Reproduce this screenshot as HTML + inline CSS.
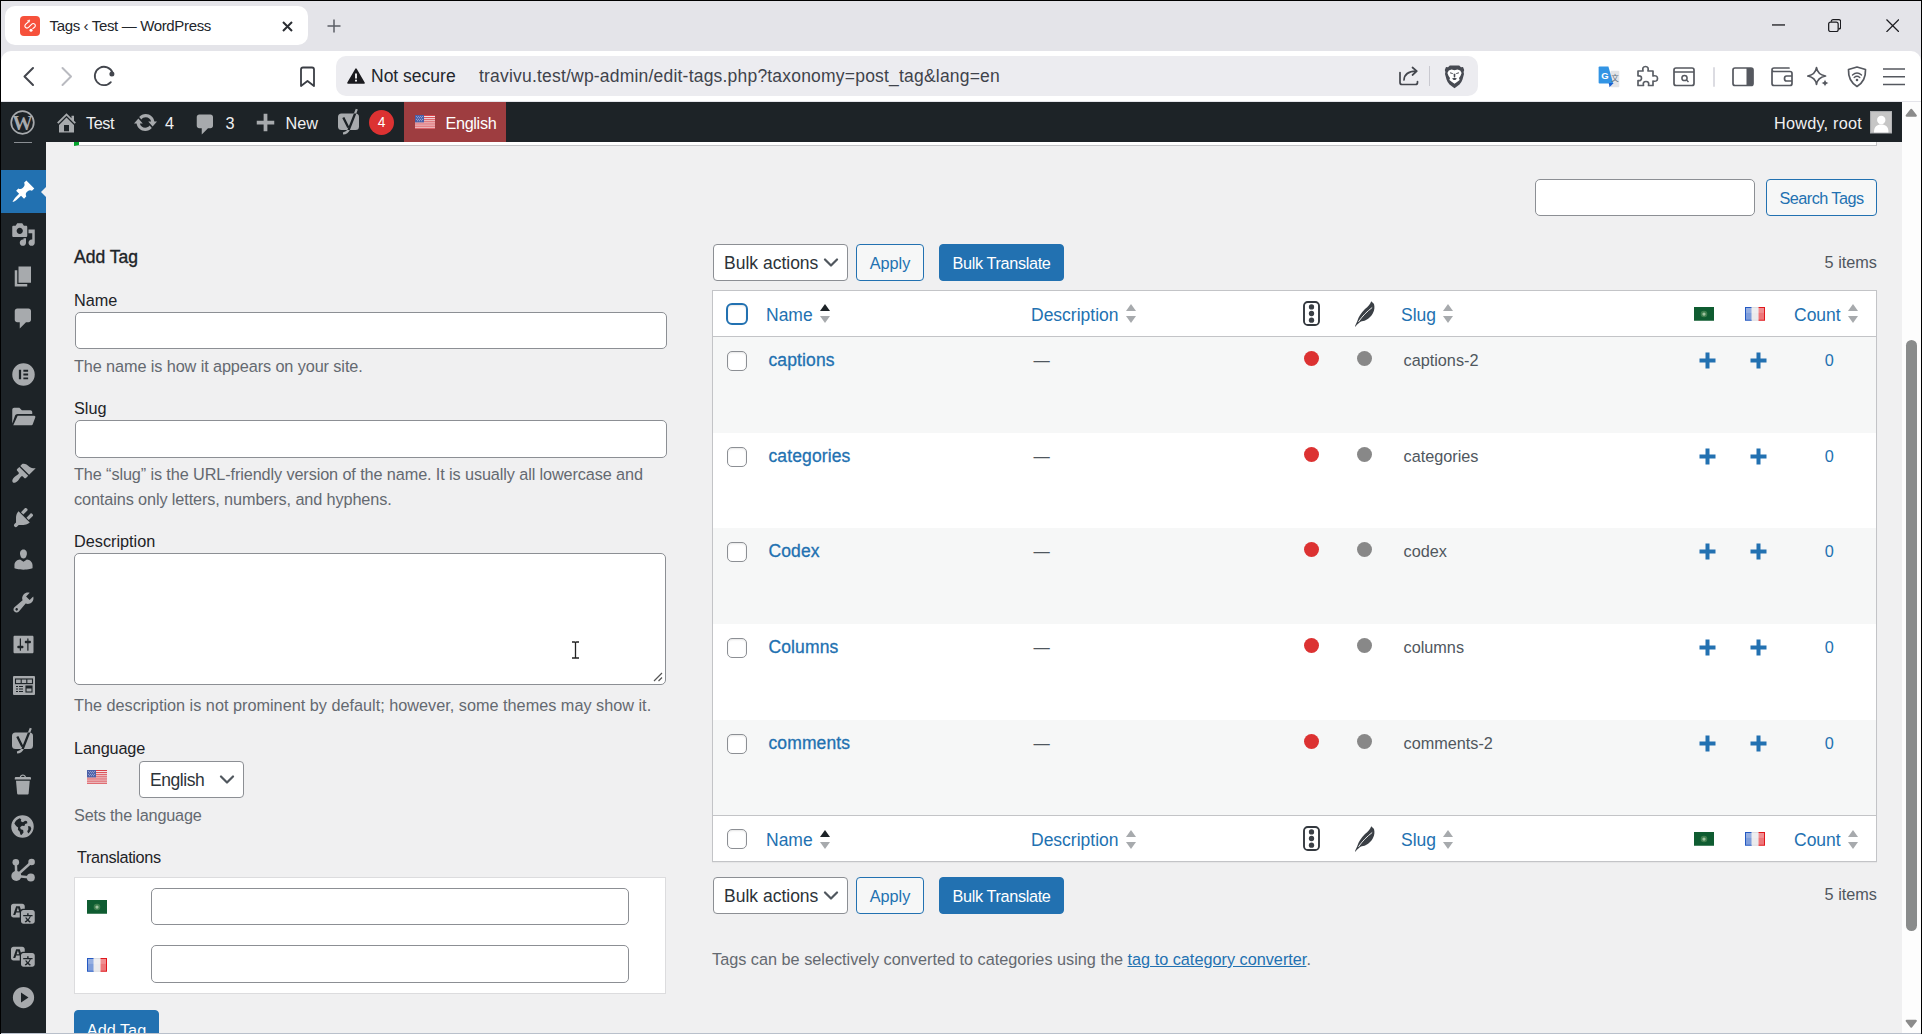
<!DOCTYPE html>
<html lang="en">
<head>
<meta charset="utf-8">
<title>Tags ‹ Test — WordPress</title>
<style>
*{box-sizing:border-box}
html,body{margin:0;padding:0}
body{width:1922px;height:1034px;overflow:hidden;background:#000;position:relative;font-family:"Liberation Sans",sans-serif;font-size:16.25px;color:#3c434a;line-height:1.4}
.abs{position:absolute}
svg{display:block}
#win{position:absolute;left:1px;top:1px;width:1920px;height:1033px;overflow:hidden;background:#e4e4e9}
#bottomline{position:absolute;left:0;top:1032px;width:1920px;height:1px;background:#b9c0cb;z-index:50}
/* ---------- browser chrome ---------- */
#tab{position:absolute;left:4px;top:5px;width:303px;height:39px;background:#fff;border-radius:10px}
#tab .fav{position:absolute;left:15px;top:10px;width:20px;height:20px;border-radius:4px;background:#f6513b}
#tab .ttl{position:absolute;left:44.5px;top:10px;font-size:15px;line-height:20px;color:#22262c;white-space:nowrap;letter-spacing:-.35px}
#toolbar{position:absolute;left:0;top:50px;width:1920px;height:51px;background:#fff;border-radius:10px 10px 0 0;border-bottom:1px solid #e4e4ea}
#tbin{position:absolute;left:0;top:-1px;width:1920px;height:52px}
#urlbar{position:absolute;left:335px;top:6px;width:1142px;height:40px;border-radius:10px;background:#ececf0}
#urlbar .ns{position:absolute;left:35px;top:9px;font-size:17.5px;line-height:22px;color:#22262c;white-space:nowrap}
#urlbar .url{position:absolute;left:143px;top:9px;font-size:17.5px;line-height:22px;color:#3f434b;white-space:nowrap;letter-spacing:.2px}
/* ---------- page ---------- */
#page{position:absolute;left:0;top:101px;width:1901px;height:931px;overflow:hidden;background:#f0f0f1}
#sb{position:absolute;left:1901px;top:101px;width:19px;height:931px;background:#fdfdfd}
#sb .thumb{position:absolute;left:4px;top:238px;width:11px;height:591px;border-radius:5.5px;background:#8a8c8c}
#adminbar{position:absolute;left:0;top:0;width:1901px;height:40px;background:#1d2327;color:#f0f0f1;z-index:10}
#adminbar .t{position:absolute;top:0;line-height:43px;font-size:16.25px;white-space:nowrap;color:#f0f0f1}
#menu{position:absolute;left:0;top:40px;width:45px;height:900px;background:#1d2327}
#menu .cur{position:absolute;left:0;top:28px;width:45px;height:43px;background:#2271b1}
#menu .cur:after{content:"";position:absolute;right:0;top:17px;border:5px solid transparent;border-right-color:#f0f0f1;border-left:0;height:0;width:0}
.mi{position:absolute;left:10px;width:25px;height:25px;fill:#a7aaad}

/* ---------- content ---------- */
#content{position:absolute;left:0;top:0;width:1901px;height:931px}
.tx{position:absolute;white-space:nowrap;line-height:24px;font-size:16.25px}
.lbl{color:#1d2327}
.help{color:#646970}
.inp{position:absolute;background:#fff;border:1px solid #8c8f94;border-radius:5px}
.btn{position:absolute;border:1px solid #2271b1;border-radius:4px;background:#f6f7f7;color:#2271b1;font-size:16.25px;text-align:center;line-height:37px;white-space:nowrap}
.btn.pri{background:#2271b1;color:#fff}
.sel{position:absolute;background:#fff;border:1px solid #8c8f94;border-radius:4px;color:#2c3338;font-size:17.5px;line-height:37px;padding-left:10px;white-space:nowrap}
.sel svg{position:absolute;right:8px;top:13px}
.flag{position:absolute;width:20px;height:13.75px}
#notice{position:absolute;left:73px;top:40px;width:1803px;height:4px;background:#fff;border-left:5px solid #00a32a;border-bottom:1px solid #c3c4c7;border-right:1px solid #c3c4c7}
#trbox{position:absolute;left:73px;top:775px;width:592px;height:117px;background:#fff;border:1px solid #dcdcde}
/* table */
#tbl{position:absolute;left:711px;top:188px;width:1165px;border:1px solid #c3c4c7;border-spacing:0;border-collapse:separate;table-layout:fixed;background:#fff;box-shadow:0 1px 1px rgba(0,0,0,.04)}
#tbl th,#tbl td{padding:0;margin:0;text-align:left;vertical-align:top;position:relative;font-weight:400;overflow:visible}
#tbl thead th{height:45px;border-bottom:1px solid #c3c4c7;font-size:17.5px;color:#2271b1;line-height:42px;padding:3px 0 0 10px;white-space:nowrap}
#tbl tfoot th{height:45px;border-top:1px solid #c3c4c7;font-size:17.5px;color:#2271b1;line-height:42px;padding:3px 0 0 10px;white-space:nowrap}
#tbl tbody td{height:95.7px;font-size:16.25px;color:#50575e;line-height:24px;padding:11px 0 0 12.5px;white-space:nowrap}
#tbl tbody tr:nth-child(odd) td{background:#f6f7f7}
#tbl .rt{font-size:17.5px;font-weight:400;color:#2271b1;letter-spacing:.12px;-webkit-text-stroke:.3px #2271b1}
.cb{position:absolute;left:14px;top:14px;width:20px;height:20px;border:1px solid #8c8f94;border-radius:5px;background:#fff;box-shadow:inset 0 1px 2px rgba(0,0,0,.1)}
.cb.foc{left:13px;top:12px;width:22px;height:22px;border:2px solid #2271b1;border-radius:6px}
.sort{display:inline-block;vertical-align:middle;margin-left:7px;margin-top:-4px;position:relative;top:-.7px}
.dot{position:absolute;left:10px;top:14px;width:15px;height:15px;border-radius:50%}
.dot.r{background:#dc3232;left:11px}.dot.g{background:#888;left:12px}
.plus{position:absolute;left:14.5px;top:15px}
.cnt{display:block;text-align:center;color:#2271b1;padding-right:14px}
</style>
</head>
<body>
<div id="win">
<div id="bottomline"></div>
<!-- TABSTRIP -->
<div id="tab"><div class="fav"><svg width="20" height="20" viewBox="0 0 20 20"><path d="M7.500 4.800 L9.700 3.900 L9.200 6.200 Z" fill="#fff" stroke="#fff" stroke-width=".6" stroke-linejoin="round"/><path d="M8.200 6 L5.800 8.200 Q4 10 5.600 11.500 Q7.200 12.800 8.800 11.200 L11.500 8.300 Q13.200 6.700 14.700 8.200 Q16.200 9.800 14.200 11.500 L12.800 12.700" stroke="#fff" stroke-width="1.100" fill="none" stroke-linecap="round"/><circle cx="11" cy="14.300" r="1.500" fill="#fff"/></svg></div><div class="ttl">Tags ‹ Test — WordPress</div></div>
<svg class="abs" style="left:280.5px;top:19.5px" width="11" height="11" viewBox="0 0 11 11"><path d="M1 1 L10 10 M10 1 L1 10" stroke="#2a2d33" stroke-width="2" fill="none"/></svg><svg class="abs" style="left:325.5px;top:18px" width="14" height="14" viewBox="0 0 14 14"><path d="M7 0.500 V13.500 M0.500 7 H13.500" stroke="#5b5e66" stroke-width="1.500" fill="none"/></svg><svg class="abs" style="left:1771px;top:22.600px" width="13" height="2" viewBox="0 0 13 2"><rect width="13" height="1.300" y="0.300" fill="#1b1b1f"/></svg><svg class="abs" style="left:1826.5px;top:17.5px" width="13.300" height="13.300" viewBox="0 0 14 14"><rect x="0.700" y="3.200" width="10" height="10" rx="2" fill="none" stroke="#1b1b1f" stroke-width="1.300"/><path d="M3.500 3 V2.700 Q3.500 0.700 5.500 0.700 H11.300 Q13.300 0.700 13.300 2.700 V8.500 Q13.300 10.500 11.300 10.500 H11" fill="none" stroke="#1b1b1f" stroke-width="1.300"/></svg><svg class="abs" style="left:1884.5px;top:17.800px" width="13.400" height="13.400" viewBox="0 0 14 14"><path d="M0.500 0.500 L13.500 13.500 M13.500 0.500 L0.500 13.500" stroke="#1b1b1f" stroke-width="1.300" fill="none"/></svg>
<!-- TOOLBAR -->
<div id="toolbar"><div id="tbin">
  <div id="urlbar"><div class="ns">Not secure</div><div class="url">travivu.test/wp-admin/edit-tags.php?taxonomy=post_tag&amp;lang=en</div></div>
<svg class="abs" style="left:21.5px;top:16px" width="13" height="21" viewBox="0 0 13 21"><path d="M10 2 L1.500 10.500 L10 19" stroke="#43464d" stroke-width="2" fill="none" stroke-linecap="round" stroke-linejoin="round"/></svg><svg class="abs" style="left:59px;top:16px" width="13" height="21" viewBox="0 0 13 21"><path d="M2.500 2 L11 10.500 L2.500 19" stroke="#b9bac0" stroke-width="2" fill="none" stroke-linecap="round" stroke-linejoin="round"/></svg><svg class="abs" style="left:91px;top:13.5px" width="24" height="24" viewBox="0 0 24 24"><path d="M20.650 8.850 A9.200 9.200 0 1 0 18.840 18.160" stroke="#43464d" stroke-width="1.800" fill="none" stroke-linecap="round"/><circle cx="19.900" cy="9.900" r="2.500" fill="#43464d"/></svg><svg class="abs" style="left:298px;top:15.5px" width="17" height="22" viewBox="0 0 17 22"><path d="M2 3.500 Q2 1.500 4 1.500 H13 Q15 1.500 15 3.500 V20 L8.500 15 L2 20 Z" stroke="#3a3d44" stroke-width="1.800" fill="none" stroke-linejoin="round"/></svg><svg class="abs" style="left:346px;top:18px" width="18" height="16" viewBox="0 0 18 16"><path d="M9 1.200 L17 15 H1 Z" fill="#1b1b1f" stroke="#1b1b1f" stroke-width="1.600" stroke-linejoin="round"/><rect x="8.100" y="5.500" width="1.800" height="5" fill="#fff"/><rect x="8.100" y="11.700" width="1.800" height="1.800" fill="#fff"/></svg><svg class="abs" style="left:1397px;top:16px" width="21" height="20" viewBox="0 0 21 20"><path d="M2 6.500 V16.500 Q2 18.500 4 18.500 H17.500 Q19.500 18.500 19.500 16.500 V15.500" stroke="#43464d" stroke-width="1.700" fill="none" stroke-linecap="round"/><path d="M6 14 Q6.500 5.500 18 5.200 M14.500 1.500 L18.800 5.200 L14.500 9" stroke="#43464d" stroke-width="1.700" fill="none" stroke-linecap="round" stroke-linejoin="round"/></svg><svg class="abs" style="left:1427.8px;top:16px" width="1" height="20" viewBox="0 0 1 20"><rect width="1" height="20" fill="#c9c9d0"/></svg><svg class="abs" style="left:1442.500px;top:14.500px" width="21" height="24" viewBox="0 0 21 24"><path d="M5.800 0.500 H15.200 L17 2.200 L19 2 L20.200 4.900 L19.600 7 L20 9 L18.500 14.500 Q17.500 17.500 15.500 19.500 L10.500 23.300 L5.500 19.500 Q3.500 17.500 2.500 14.500 L1 9 L1.400 7 L0.800 4.900 L2 2 L4 2.200 Z" fill="#474a52"/><path d="M10.500 5.200 L13.500 4.600 L16.200 5.600 L17.600 8 L16.400 11 L15 13 L15.600 15 L13 17 L10.500 18.800 L8 17 L5.400 15 L6 13 L4.600 11 L3.400 8 L4.800 5.600 L7.500 4.600 Z" fill="#fff"/><path d="M6.200 7.200 L9 8.200 L8.600 9 L6 8.200 Z M14.800 7.200 L12 8.200 L12.400 9 L15 8.200 Z M9.600 8.800 H11.400 L11.200 12.300 H9.800 Z M8 13.600 L10.500 12.800 L13 13.600 L11.300 15 H9.700 Z" fill="#474a52"/></svg><svg class="abs" style="left:1596.500px;top:15.500px" width="22" height="22" viewBox="0 0 22 22"><rect x="12.500" y="4.800" width="8.800" height="16.500" rx="1" fill="#e3e4e7"/><path d="M1.600 0.400 H10.400 L15.200 17.500 H1.600 Q0.600 17.500 0.600 16.500 V1.400 Q0.600 0.400 1.600 0.400 Z" fill="#3294e4"/><path d="M10.800 17 H15.600 L11.500 21.200 Z" fill="#1b5fd0"/><text x="3.300" y="12.600" font-family="Liberation Sans,sans-serif" font-size="9.500" font-weight="700" fill="#fff">G</text><text x="13.300" y="15.300" font-family="Noto Sans CJK SC,Liberation Sans,sans-serif" font-size="7.500" fill="#5f6e80">文</text></svg><svg class="abs" style="left:1634.5px;top:15px" width="24" height="22" viewBox="0 0 24 22"><path d="M2 6 H7 Q6 1.500 9.500 1.500 Q13 1.500 12 6 H17 V11 Q21.500 10 21.500 13.500 Q21.500 17 17 16 V20.500 H12.500 Q13.500 16.500 10 16.500 Q6.500 16.500 7.500 20.500 H2 V15.500 Q5.500 16 5.500 13.200 Q5.500 10.500 2 11 Z" stroke="#5a5e65" stroke-width="1.700" fill="none" stroke-linejoin="round"/></svg><svg class="abs" style="left:1671.5px;top:17px" width="22" height="19.5" viewBox="0 0 22 19.5"><rect x="1" y="1" width="20" height="17.500" rx="2" stroke="#55585f" stroke-width="1.700" fill="none"/><path d="M1 5 H21" stroke="#55585f" stroke-width="1.500"/><circle cx="11.500" cy="11" r="2.600" stroke="#55585f" stroke-width="1.500" fill="none"/><path d="M13.500 13 L15.500 15" stroke="#55585f" stroke-width="1.500"/></svg><svg class="abs" style="left:1711.5px;top:16.5px" width="2" height="20" viewBox="0 0 2 20"><rect width="2" height="20" rx="1" fill="#dcdce2"/></svg><svg class="abs" style="left:1731px;top:17px" width="22" height="19.5" viewBox="0 0 22 19.5"><rect x="1" y="1" width="20" height="17.500" rx="2" stroke="#55585f" stroke-width="1.700" fill="none"/><path d="M14.500 1 H19 Q21 1 21 3 V16.500 Q21 18.500 19 18.500 H14.500 Z" fill="#55585f"/></svg><svg class="abs" style="left:1769.5px;top:17px" width="22" height="19.5" viewBox="0 0 22 19.5"><path d="M1 4 V16.500 Q1 18.500 3 18.500 H19 Q21 18.500 21 16.500 V6.500 Q21 4.500 19 4.500 H3 Q1 4.500 1 3 Q1 1 3 1 H18" stroke="#55585f" stroke-width="1.700" fill="none" stroke-linecap="round"/><path d="M21 9 H15.500 Q13.500 9 13.500 11.500 Q13.500 14 15.500 14 H21" stroke="#55585f" stroke-width="1.700" fill="none"/></svg><svg class="abs" style="left:1806px;top:15.5px" width="23" height="22" viewBox="0 0 23 22"><path d="M9.500 1.500 Q10.500 8.500 18.500 10 Q10.500 11.500 9.500 18.500 Q8.500 11.500 0.800 10 Q8.500 8.500 9.500 1.500 Z" stroke="#55585f" stroke-width="1.700" fill="none" stroke-linejoin="round"/><path d="M18 13.500 Q18.500 16.500 21.500 17 Q18.500 17.500 18 20.500 Q17.500 17.500 14.500 17 Q17.500 16.500 18 13.500 Z" fill="#55585f"/></svg><svg class="abs" style="left:1845.5px;top:15.5px" width="20" height="22" viewBox="0 0 20 22"><path d="M10 1 L18.500 3.500 Q19 15 10 20.500 Q1 15 1.500 3.500 Z" stroke="#55585f" stroke-width="1.700" fill="none" stroke-linejoin="round"/><path d="M5.500 9 Q10 5 14.500 9 M7.200 11.500 Q10 9 12.800 11.500" stroke="#55585f" stroke-width="1.400" fill="none" stroke-linecap="round"/><circle cx="10" cy="14" r="1.300" fill="#55585f"/></svg><svg class="abs" style="left:1881.5px;top:18px" width="22" height="18" viewBox="0 0 22 18"><path d="M0.500 1 H21.500 M0.500 8.800 H21.500 M0.500 16.500 H21.500" stroke="#55585f" stroke-width="1.600" stroke-linecap="round"/></svg>
</div></div>
<!-- PAGE -->
<div id="page">
  <div id="adminbar"><svg class="abs" style="left:9px;top:8px" width="25" height="25" viewBox="0 0 25 25"><circle cx="12.5" cy="12.500" r="11.300" fill="none" stroke="#a7aaad" stroke-width="1.700"/><text x="12.500" y="19.600" text-anchor="middle" font-family="Liberation Serif,serif" font-weight="700" font-size="20.500" fill="#a7aaad">W</text></svg><svg class="abs" style="left:52.5px;top:8px" width="25" height="25" viewBox="0 0 20 20" fill="#a7aaad"><path d="M16 8.5l1.530 1.530-1.060 1.060L10 4.620l-6.470 6.470-1.060-1.060L10 2.500l4 4v-2h2v4zm-6-2.460l6 5.990V18H4v-5.970zM12 17v-5H8v5h4z"/></svg><div class="t" style="left:85px;letter-spacing:-.4px">Test</div><svg class="abs" style="left:132px;top:8px" width="25" height="25" viewBox="0 0 20 20" fill="#a7aaad"><path d="M10.2 3.280c3.530 0 6.430 2.610 6.920 6h2.080l-3.500 4-3.500-4h2.320c-.45-1.970-2.210-3.450-4.320-3.450-1.450 0-2.730.71-3.540 1.780L4.950 5.660C6.230 4.200 8.110 3.280 10.200 3.280zm-.4 13.440c-3.520 0-6.430-2.610-6.920-6H.8l3.500-4c1.170 1.330 2.330 2.670 3.500 4H5.480c.45 1.970 2.210 3.450 4.320 3.450 1.450 0 2.730-.71 3.540-1.780l1.710 1.950c-1.280 1.460-3.150 2.380-5.250 2.380z"/></svg><div class="t" style="left:164px">4</div><svg class="abs" style="left:192px;top:10px" width="25" height="25" viewBox="0 0 20 20" fill="#a7aaad"><path d="M5 2h9c1.100 0 2 .9 2 2v7c0 1.100-.9 2-2 2h-2l-5 5v-5H5c-1.100 0-2-.9-2-2V4c0-1.100.9-2 2-2z"/></svg><div class="t" style="left:224.500px">3</div><svg class="abs" style="left:252px;top:8px" width="25" height="25" viewBox="0 0 20 20" fill="#a7aaad"><path d="M17 8.500v3h-5.500V17h-3v-5.500H3v-3h5.500V3h3v5.500z"/></svg><div class="t" style="left:284.500px">New</div><svg class="abs" style="left:336px;top:6px" width="24" height="27" viewBox="0 0 24 27"><defs><clipPath id="yc8"><rect x="1" y="5.500" width="21" height="16.500" rx="3.500"/></clipPath></defs><path d="M19.800 1.200 L11.800 21.500 Q10.300 25 6 25.500" stroke="#a7aaad" stroke-width="2.200" fill="none"/><rect x="1" y="5.500" width="21" height="16.500" rx="3.500" fill="#a7aaad"/><g clip-path="url(#yc8)"><path d="M6.300 9.500 L11.300 19.500 M20.500 -0.500 L11.800 21.500 Q10.300 25 6 25.500" stroke="#1d2327" stroke-width="2.300" fill="none"/></g></svg><div class="abs" style="left:368px;top:8px;width:25px;height:25px;border-radius:50%;background:#dc3232;color:#fff;text-align:center;font-size:13.750px;line-height:25px">4</div><div class="abs" style="left:403px;top:0;width:102px;height:40px;background:#9e3d40"></div><svg class="flag" style="left:414px;top:13px" viewBox="0 0 20 14" preserveAspectRatio="none"><rect width="20" height="14" fill="#f4f0f0"/><g fill="#d9414a"><rect y="0" width="20" height="1.1"/><rect y="2.15" width="20" height="1.1"/><rect y="4.3" width="20" height="1.1"/><rect y="6.45" width="20" height="1.1"/><rect y="8.6" width="20" height="1.1"/><rect y="10.75" width="20" height="1.1"/><rect y="12.9" width="20" height="1.1"/></g><rect width="9" height="7.5" fill="#4a5fa8"/><g fill="#dfe3f2"><circle cx="1.6" cy="1.4" r=".5"/><circle cx="3.6" cy="1.4" r=".5"/><circle cx="5.6" cy="1.4" r=".5"/><circle cx="7.6" cy="1.4" r=".5"/><circle cx="2.6" cy="2.9" r=".5"/><circle cx="4.6" cy="2.9" r=".5"/><circle cx="6.6" cy="2.9" r=".5"/><circle cx="1.6" cy="4.4" r=".5"/><circle cx="3.6" cy="4.4" r=".5"/><circle cx="5.6" cy="4.4" r=".5"/><circle cx="7.6" cy="4.4" r=".5"/><circle cx="2.6" cy="5.9" r=".5"/><circle cx="4.6" cy="5.9" r=".5"/><circle cx="6.6" cy="5.9" r=".5"/></g></svg><div class="t" style="left:444.500px;color:#fff;letter-spacing:-.35px">English</div><div class="t" style="left:1773px;letter-spacing:.22px">Howdy, root</div><svg class="abs" style="left:1868.700px;top:9px" width="22.500" height="22.500" viewBox="0 0 22.500 22.500"><rect width="22.500" height="22.500" fill="#a9abae"/><rect x="1.100" y="1.100" width="20.300" height="20.300" fill="#c6c6c6"/><circle cx="11.250" cy="9" r="4.200" fill="#fff"/><path d="M4 21.400 C4 15.500 7 13.600 11.250 13.600 C15.500 13.600 18.500 15.500 18.500 21.400 Z" fill="#fff"/></svg></div>
  <div id="menu"><div class="cur"></div><div class="abs" style="left:13px;top:0;width:18px;height:1px;background:#8a8e93"></div><svg class="abs" style="left:10px;top:36.5px" width="25" height="25" viewBox="0 0 20 20" fill="#fff"><path d="M10.440 3.020l1.820-1.820 6.360 6.350-1.830 1.820c-1.050-.68-2.480-.57-3.410.36l-.75.75c-.92.93-1.040 2.350-.35 3.410l-1.830 1.820-2.410-2.410-2.800 2.790c-.42.42-3.380 2.710-3.800 2.290s1.860-3.390 2.280-3.810l2.790-2.790L4.100 9.360l1.830-1.820c1.050.69 2.480.57 3.400-.36l.75-.75c.93-.92 1.050-2.350.36-3.410z"/></svg><svg class="abs" style="left:10px;top:80px" width="25" height="25" viewBox="0 0 20 20" fill="#a7aaad"><path d="M13 11V4c0-.55-.45-1-1-1h-1.670L9 1H5L3.670 3H2c-.55 0-1 .45-1 1v7c0 .55.45 1 1 1h10c.55 0 1-.45 1-1zM7 4.500c1.380 0 2.500 1.120 2.500 2.500S8.380 9.500 7 9.500 4.500 8.380 4.500 7 5.620 4.500 7 4.500zM14 6h5v10.500c0 1.380-1.120 2.500-2.500 2.500S14 17.880 14 16.500s1.120-2.500 2.500-2.500c.17 0 .34.02.5.05V9h-3V6zm-4 8.050V13h2v3.500c0 1.380-1.120 2.500-2.500 2.500S7 17.880 7 16.500 8.120 14 9.500 14c.17 0 .34.02.5.05z"/></svg><svg class="abs" style="left:10px;top:121.5px" width="25" height="25" viewBox="0 0 20 20" fill="#a7aaad"><path d="M6 15V2h10v13H6zm-1 1h8v2H3V5h2v11z"/></svg><svg class="abs" style="left:10px;top:164.0px" width="25" height="25" viewBox="0 0 20 20" fill="#a7aaad"><path d="M5 2h9c1.100 0 2 .9 2 2v7c0 1.100-.9 2-2 2h-2l-5 5v-5H5c-1.100 0-2-.9-2-2V4c0-1.100.9-2 2-2z"/></svg><svg class="abs" style="left:10px;top:220.0px" width="25" height="25" viewBox="0 0 20 20" fill="#a7aaad"><path fill-rule="evenodd" d="M10 1a9 9 0 1 0 0 18 9 9 0 0 0 0-18zM6.300 6.200h1.800v7.600H6.300zM9.900 6.200h3.800v1.500H9.900zM9.900 9.250h3.800v1.500H9.900zM9.900 12.300h3.800v1.500H9.900z"/></svg><svg class="abs" style="left:10px;top:261.5px" width="25" height="25" viewBox="0 0 20 20" fill="#a7aaad"><path d="M1 4.500c0-.8.7-1.500 1.500-1.500h4.200l2 2h6.800c.8 0 1.500.7 1.500 1.500V8H5.200c-.9 0-1.700.6-2 1.400L1 15.500zM5.300 9.300h13.200c.7 0 1.200.7.900 1.400l-2 5.400c-.2.500-.7.900-1.300.9H1.800z"/></svg><svg class="abs" style="left:10px;top:319px" width="25" height="25" viewBox="0 0 20 20" fill="#a7aaad"><path d="M14.480 11.060L7.410 3.990l1.500-1.500c.5-.56 2.300-.47 3.510.32 1.210.8 1.430 1.280 2.910 2.100 1.180.64 2.450 1.260 4.450.85zm-.71.71L6.700 4.700 4.930 6.470c-.39.39-.39 1.020 0 1.410l1.060 1.060c.39.39.39 1.030 0 1.420-.6.6-1.430 1.110-2.210 1.690-.35.26-.7.53-1.010.84C1.430 14.230.4 16.080 1.400 17.070c.99 1 2.840-.03 4.180-1.360.31-.31.58-.66.85-1.020.57-.78 1.080-1.610 1.690-2.210.39-.39 1.020-.39 1.410 0l1.060 1.060c.39.39 1.020.39 1.410 0z"/></svg><svg class="abs" style="left:10px;top:362.5px" width="25" height="25" viewBox="0 0 20 20" fill="#a7aaad"><path d="M13.110 4.360L9.870 7.600 8 5.730l3.240-3.240c.35-.34 1.050-.2 1.560.32.52.51.66 1.210.31 1.550zm-8 1.770l.91-1.120 9.010 9.010-1.190.84c-.71.71-2.630 1.160-3.820 1.160H6.140L4.900 17.260c-.59.59-1.540.59-2.120 0-.59-.58-.59-1.530 0-2.120l1.240-1.240v-3.880c0-1.130.4-3.190 1.090-3.890zm7.260 3.970l3.240-3.240c.34-.35 1.040-.21 1.550.31.52.51.66 1.210.31 1.550l-3.240 3.250z"/></svg><svg class="abs" style="left:10px;top:405px" width="25" height="25" viewBox="0 0 20 20" fill="#a7aaad"><path d="M10 9.250c-2.270 0-2.730-3.440-2.730-3.440C7 4.020 7.820 2 9.970 2c2.160 0 2.980 2.020 2.710 3.810 0 0-.41 3.440-2.680 3.440zm0 2.570L12.720 10c2.390 0 4.520 2.330 4.520 4.530v2.490s-3.650 1.130-7.240 1.130c-3.650 0-7.240-1.130-7.240-1.130v-2.490c0-2.250 1.940-4.480 4.470-4.480z"/></svg><svg class="abs" style="left:10px;top:447.5px" width="25" height="25" viewBox="0 0 20 20" fill="#a7aaad"><path d="M16.680 9.770c-1.340 1.340-3.300 1.670-4.950.99l-5.410 6.520c-.99.99-2.590.99-3.580 0s-.99-2.590 0-3.570l6.520-5.420c-.68-1.650-.35-3.610.99-4.950 1.280-1.280 3.120-1.620 4.720-1.060l-2.890 2.890 2.820 2.820 2.860-2.870c.53 1.580.18 3.390-1.080 4.650zM3.810 16.210c.4.39 1.040.39 1.430 0 .4-.4.4-1.040 0-1.430-.39-.4-1.030-.4-1.430 0-.39.39-.39 1.030 0 1.430z" fill-rule="evenodd"/></svg><svg class="abs" style="left:10px;top:490px" width="25" height="25" viewBox="0 0 20 20" fill="#a7aaad"><path fill-rule="evenodd" d="M18 16V4c0-.55-.45-1-1-1H3c-.55 0-1 .45-1 1v12c0 .55.45 1 1 1h14c.55 0 1-.45 1-1zM8 11h1c.55 0 1 .45 1 1s-.45 1-1 1H8v1.500c0 .28-.22.5-.5.5s-.5-.22-.5-.5V13H6c-.55 0-1-.45-1-1s.45-1 1-1h1V5.500c0-.28.22-.5.5-.5s.5.22.5.5V11zm5-2h-1c-.55 0-1-.45-1-1s.45-1 1-1h1V5.500c0-.28.22-.5.5-.5s.5.22.5.5V7h1c.55 0 1 .45 1 1s-.45 1-1 1h-1v5.500c0 .28-.22.5-.5.5s-.5-.22-.5-.5V9z"/></svg><svg class="abs" style="left:11.500px;top:534px" width="22" height="19" viewBox="0 0 22 19"><rect width="22" height="19" rx="1" fill="#a7aaad"/><rect x="2.500" y="3" width="17" height="4.600" fill="none" stroke="#1d2327" stroke-width="1.100"/><path d="M8.200 3 V7.600 M13.800 3 V7.600" stroke="#1d2327" stroke-width="1.100"/><path d="M3 10.500 H5 M6 10.500 H10 M3 13 H5 M6 13 H10 M3 15.500 H5 M6 15.500 H10" stroke="#1d2327" stroke-width="1.100"/><rect x="13" y="10" width="6" height="6" fill="none" stroke="#1d2327" stroke-width="1.100"/><rect x="13" y="10" width="6" height="2.500" fill="#1d2327"/></svg><svg class="abs" style="left:10px;top:584.5px" width="24" height="27" viewBox="0 0 24 27"><defs><clipPath id="yc586"><rect x="1" y="5.500" width="21" height="16.500" rx="3.500"/></clipPath></defs><path d="M19.800 1.200 L11.800 21.500 Q10.300 25 6 25.500" stroke="#a7aaad" stroke-width="2.200" fill="none"/><rect x="1" y="5.500" width="21" height="16.500" rx="3.500" fill="#a7aaad"/><g clip-path="url(#yc586)"><path d="M6.300 9.500 L11.300 19.500 M20.500 -0.500 L11.800 21.500 Q10.300 25 6 25.500" stroke="#1d2327" stroke-width="2.300" fill="none"/></g></svg><svg class="abs" style="left:10px;top:629.5px" width="25" height="25" viewBox="0 0 20 20" fill="#a7aaad"><path fill-rule="evenodd" d="M12 4h3c.6 0 1 .4 1 1v1H3V5c0-.6.5-1 1-1h3c.2-1.100 1.300-2 2.500-2s2.300.9 2.500 2zM8 4h3c-.2-.6-.9-1-1.500-1S8.200 3.400 8 4zM4 7h11l-.9 10.100c0 .5-.5.9-1 .9H5.900c-.5 0-.9-.4-1-.9L4 7z"/></svg><svg class="abs" style="left:8.5px;top:672px" width="25" height="25" viewBox="0 0 20 20" fill="#a7aaad"><path fill-rule="evenodd" d="M10 1a9 9 0 1 0 0 18 9 9 0 0 0 0-18zM3.500 7.500c.8-1.900 2.300-3.400 4.200-4.200l1.300.9-.4 1.600 1.700.8 1.800-1.200 1.500.4.300 1.500-1.800.7-.6 1.600-1.900-.3-1.500 1.200.5 1.700 1.900.6.300 2-1.600 1.900-.9-.3-.5-2.300-1.500-1.500.2-1.900-1.600-1.200zM14.500 9.500l1.800.4.700 1.700c-.3 1.600-1.200 3-2.400 4l-.8-1.900.9-1.600z"/></svg><svg class="abs" style="left:10px;top:716px" width="25" height="25" viewBox="0 0 25 25"><g stroke="#a7aaad" stroke-width="2.500" fill="none"><path d="M4.800 4.200 L5.300 18 L20.600 4 M5.300 18 L19.800 19.500"/></g><g fill="#a7aaad"><circle cx="4.800" cy="4.200" r="3.300"/><circle cx="20.600" cy="4" r="3.300"/><circle cx="5.300" cy="18" r="5"/><circle cx="19.800" cy="19.500" r="4"/></g></svg><svg class="abs" style="left:10px;top:758.0px" width="25" height="25" viewBox="0 0 20 20" fill="#a7aaad"><path fill-rule="evenodd" d="M11 7H9.490c-.63 0-1.250.3-1.590.7L7 5H4.130l-2.390 7h1.690l.74-2H7v4H2c-1.100 0-2-.9-2-2V5c0-1.100.9-2 2-2h7c1.100 0 2 .9 2 2v2zM6.510 9H4.490l1-2.930zM10 8h7c1.100 0 2 .9 2 2v7c0 1.100-.9 2-2 2h-7c-1.100 0-2-.9-2-2v-7c0-1.100.9-2 2-2zm7.250 5v-1.080h-3.170V10.500h-1.150v1.420H9.760V13h5.300c-.34.85-.9 1.670-1.580 2.350-.38-.42-.72-.86-.98-1.320h-1.180c.3.67.75 1.330 1.310 1.970-.5.45-1.080.86-1.680 1.180l.63.87c.65-.39 1.240-.85 1.790-1.350.58.56 1.210 1.040 1.870 1.410l.55-1c-.58-.3-1.140-.7-1.650-1.160.77-.86 1.370-1.850 1.700-2.950h1.410z"/></svg><svg class="abs" style="left:10px;top:801.0px" width="25" height="25" viewBox="0 0 20 20" fill="#a7aaad"><path fill-rule="evenodd" d="M11 7H9.490c-.63 0-1.250.3-1.590.7L7 5H4.130l-2.390 7h1.690l.74-2H7v4H2c-1.100 0-2-.9-2-2V5c0-1.100.9-2 2-2h7c1.100 0 2 .9 2 2v2zM6.510 9H4.490l1-2.930zM10 8h7c1.100 0 2 .9 2 2v7c0 1.100-.9 2-2 2h-7c-1.100 0-2-.9-2-2v-7c0-1.100.9-2 2-2zm7.250 5v-1.080h-3.170V10.500h-1.150v1.420H9.760V13h5.300c-.34.85-.9 1.670-1.580 2.350-.38-.42-.72-.86-.98-1.320h-1.180c.3.67.75 1.330 1.310 1.970-.5.45-1.080.86-1.680 1.180l.63.87c.65-.39 1.240-.85 1.790-1.350.58.56 1.210 1.040 1.870 1.410l.55-1c-.58-.3-1.140-.7-1.650-1.160.77-.86 1.370-1.850 1.700-2.950h1.410z"/></svg><svg class="abs" style="left:10px;top:843.0px" width="25" height="25" viewBox="0 0 20 20" fill="#a7aaad"><path fill-rule="evenodd" d="M10 1.500a8.500 8.500 0 1 0 0 17 8.500 8.500 0 0 0 0-17zM8 14V6l6 4z"/></svg></div>
  <div id="content">
  <div id="notice"></div>
  <!-- ADD TAG FORM -->
  <div class="tx lbl" style="left:73px;top:143px;font-size:17.5px;font-weight:400;letter-spacing:0;-webkit-text-stroke:.35px #1d2327">Add Tag</div>
  <div class="tx lbl" style="left:73px;top:186px">Name</div>
  <div class="inp" style="left:74px;top:210px;width:592px;height:37px"></div>
  <div class="tx help" style="left:73px;top:252px;letter-spacing:-.1px">The name is how it appears on your site.</div>
  <div class="tx lbl" style="left:73px;top:294px">Slug</div>
  <div class="inp" style="left:74px;top:318px;width:592px;height:38px"></div>
  <div class="tx help" style="left:73px;top:360px;line-height:24.6px;letter-spacing:-.11px">The “slug” is the URL-friendly version of the name. It is usually all lowercase and<br>contains only letters, numbers, and hyphens.</div>
  <div class="tx lbl" style="left:73px;top:427px">Description</div>
  <div class="inp" style="left:73px;top:451px;width:592px;height:132px"><svg style="position:absolute;right:2px;bottom:2px" width="10" height="10" viewBox="0 0 10 10"><path d="M9 1 L1 9 M9 5.5 L5.5 9" stroke="#555" stroke-width="1.2" fill="none"/></svg></div>
  <svg class="abs" style="left:569px;top:539px" width="11" height="18" viewBox="0 0 11 18"><path d="M2 1 H4.5 Q5.5 1 5.5 2 Q5.5 1 6.5 1 H9 M5.5 2 V16 M2 17 H4.5 Q5.5 17 5.5 16 Q5.5 17 6.5 17 H9" fill="none" stroke="#222" stroke-width="1.3"/></svg>
  <div class="tx help" style="left:73px;top:591px">The description is not prominent by default; however, some themes may show it.</div>
  <div class="tx lbl" style="left:73px;top:634px;letter-spacing:-.15px">Language</div>
  <svg class="flag" style="left:86px;top:668px" viewBox="0 0 20 14" preserveAspectRatio="none"><rect width="20" height="14" fill="#f4f0f0"/><g fill="#d9414a"><rect y="0" width="20" height="1.1"/><rect y="2.15" width="20" height="1.1"/><rect y="4.3" width="20" height="1.1"/><rect y="6.45" width="20" height="1.1"/><rect y="8.6" width="20" height="1.1"/><rect y="10.75" width="20" height="1.1"/><rect y="12.9" width="20" height="1.1"/></g><rect width="9" height="7.5" fill="#4a5fa8"/><g fill="#dfe3f2"><circle cx="1.6" cy="1.4" r=".5"/><circle cx="3.6" cy="1.4" r=".5"/><circle cx="5.6" cy="1.4" r=".5"/><circle cx="7.6" cy="1.4" r=".5"/><circle cx="2.6" cy="2.9" r=".5"/><circle cx="4.6" cy="2.9" r=".5"/><circle cx="6.6" cy="2.9" r=".5"/><circle cx="1.6" cy="4.4" r=".5"/><circle cx="3.6" cy="4.4" r=".5"/><circle cx="5.6" cy="4.4" r=".5"/><circle cx="7.6" cy="4.4" r=".5"/><circle cx="2.6" cy="5.9" r=".5"/><circle cx="4.6" cy="5.9" r=".5"/><circle cx="6.6" cy="5.9" r=".5"/></g></svg>
  <div class="sel" style="left:138px;top:659px;width:105px;height:37px;letter-spacing:-.45px">English<span><svg width="16" height="10" viewBox="0 0 16 10"><path d="M2 1.5 L8 7.5 L14 1.5" fill="none" stroke="#50575e" stroke-width="2.2" stroke-linecap="round" stroke-linejoin="round"/></svg></span></div>
  <div class="tx help" style="left:73px;top:700.5px;letter-spacing:-.2px">Sets the language</div>
  <div class="tx lbl" style="left:76px;top:743px;letter-spacing:-.35px">Translations</div>
  <div id="trbox"></div>
  <svg class="flag" style="left:86px;top:798px" viewBox="0 0 20 14" preserveAspectRatio="none"><rect width="20" height="14" fill="#0f5c31"/><circle cx="10" cy="7.200" r="3.300" fill="#4f8a58" opacity=".75"/><circle cx="10" cy="7.200" r="1.600" fill="#9fc2a0"/></svg>
  <div class="inp" style="left:150px;top:786px;width:478px;height:37px"></div>
  <svg class="flag" style="left:86px;top:856px" viewBox="0 0 20 14" preserveAspectRatio="none"><rect width="7" height="14" fill="#2358c2"/><rect x="6.500" width="7" height="14" fill="#dcdce0"/><rect x="13.500" width="6.500" height="14" fill="#e0161b"/><rect x="1" y="1" width="18" height="12" fill="#fff" opacity=".42"/><rect x="1" y="1" width="18" height="5" fill="#fff" opacity=".18"/></svg>
  <div class="inp" style="left:150px;top:843px;width:478px;height:38px"></div>
  <div class="btn pri" style="left:73px;top:908px;width:85px;height:38px;line-height:39px">Add Tag</div>

  <!-- SEARCH -->
  <div class="inp" style="left:1534px;top:77px;width:220px;height:37px"></div>
  <div class="btn" style="left:1765px;top:77px;width:111px;height:37px;letter-spacing:-.55px">Search Tags</div>
  <!-- TABLENAV TOP -->
  <div class="sel" style="left:712px;top:142px;width:135px;height:37px">Bulk actions<svg width="16" height="10" viewBox="0 0 16 10"><path d="M2 1.5 L8 7.5 L14 1.5" fill="none" stroke="#50575e" stroke-width="2.2" stroke-linecap="round" stroke-linejoin="round"/></svg></div>
  <div class="btn" style="left:855px;top:142px;width:68px;height:37px">Apply</div>
  <div class="btn pri" style="left:938px;top:142px;width:125px;height:37px;letter-spacing:-.35px">Bulk Translate</div>
  <div class="tx" style="right:25px;top:148px;color:#50575e">5 items</div>
  <table id="tbl">
    <thead><tr>
      <th style="width:43px"><span class="cb foc"></span></th>
      <th style="width:265px">Name<svg class="sort" width="10" height="19" viewBox="0 0 10 19"><path d="M5 0 L10 7 H0 Z" fill="#1d2327"/><path d="M0 12 H10 L5 19 Z" fill="#a7aaad"/></svg></th>
      <th style="width:272px">Description<svg class="sort" width="10" height="19" viewBox="0 0 10 19"><path d="M5 0 L10 7 H0 Z" fill="#a7aaad"/><path d="M0 12 H10 L5 19 Z" fill="#a7aaad"/></svg></th>
      <th style="width:52px"><svg class="abs" style="left:10px;top:10px" width="17" height="25" viewBox="0 0 17 25"><rect x="1" y="1" width="15" height="23" rx="3.800" fill="none" stroke="#33383e" stroke-width="1.900"/><circle cx="8.500" cy="5.900" r="2.650" fill="#3a3f45"/><circle cx="8.500" cy="12.500" r="2.650" fill="#3a3f45"/><circle cx="8.500" cy="19.200" r="2.650" fill="#3a3f45"/></svg></th>
      <th style="width:46px"><svg class="abs" style="left:10px;top:10px" width="20" height="26" viewBox="0 0 20 26"><path d="M16.2 0.200 C17.500 1.500 19 2.500 19.100 3.600 C19.700 6 19.600 9 18 12 C16.500 15 14 17.500 11 19 C9 20 7 20.300 6 20.600 C4.500 21.500 2.500 23 0.400 25.800 L0 25.200 C1 23 2 21 2.500 19.500 C3.500 16 6 12 10 8 C13 5.500 15.500 3 16.200 0.200 Z" fill="#3a3f45"/><path d="M3.500 20.800 C7 15.500 12 10.500 17.200 6.500" stroke="#fff" stroke-width=".9" fill="none"/></svg></th>
      <th style="width:293px">Slug<svg class="sort" width="10" height="19" viewBox="0 0 10 19"><path d="M5 0 L10 7 H0 Z" fill="#a7aaad"/><path d="M0 12 H10 L5 19 Z" fill="#a7aaad"/></svg></th>
      <th style="width:51px"><svg class="flag" style="left:10px;top:16px" viewBox="0 0 20 14" preserveAspectRatio="none"><rect width="20" height="14" fill="#0f5c31"/><circle cx="10" cy="7.200" r="3.300" fill="#4f8a58" opacity=".75"/><circle cx="10" cy="7.200" r="1.600" fill="#9fc2a0"/></svg></th>
      <th style="width:49px"><svg class="flag" style="left:10px;top:16px" viewBox="0 0 20 14" preserveAspectRatio="none"><rect width="7" height="14" fill="#2358c2"/><rect x="6.500" width="7" height="14" fill="#dcdce0"/><rect x="13.500" width="6.500" height="14" fill="#e0161b"/><rect x="1" y="1" width="18" height="12" fill="#fff" opacity=".42"/><rect x="1" y="1" width="18" height="5" fill="#fff" opacity=".18"/></svg></th>
      <th style="width:92px">Count<svg class="sort" width="10" height="19" viewBox="0 0 10 19"><path d="M5 0 L10 7 H0 Z" fill="#a7aaad"/><path d="M0 12 H10 L5 19 Z" fill="#a7aaad"/></svg></th>
    </tr></thead>
    <tbody>
    <tr><td><span class="cb"></span></td><td><span class="rt">captions</span></td><td>—</td><td><span class="dot r"></span></td><td><span class="dot g"></span></td><td>captions-2</td><td><svg class="plus" width="17" height="17" viewBox="0 0 17 17"><path d="M8.5 0.5 V16.5 M0.5 8.5 H16.5" stroke="#2271b1" stroke-width="4" fill="none"/></svg></td><td><svg class="plus" width="17" height="17" viewBox="0 0 17 17"><path d="M8.5 0.5 V16.5 M0.5 8.5 H16.5" stroke="#2271b1" stroke-width="4" fill="none"/></svg></td><td><span class="cnt">0</span></td></tr>
    <tr><td><span class="cb"></span></td><td><span class="rt">categories</span></td><td>—</td><td><span class="dot r"></span></td><td><span class="dot g"></span></td><td>categories</td><td><svg class="plus" width="17" height="17" viewBox="0 0 17 17"><path d="M8.5 0.5 V16.5 M0.5 8.5 H16.5" stroke="#2271b1" stroke-width="4" fill="none"/></svg></td><td><svg class="plus" width="17" height="17" viewBox="0 0 17 17"><path d="M8.5 0.5 V16.5 M0.5 8.5 H16.5" stroke="#2271b1" stroke-width="4" fill="none"/></svg></td><td><span class="cnt">0</span></td></tr>
    <tr><td><span class="cb"></span></td><td><span class="rt">Codex</span></td><td>—</td><td><span class="dot r"></span></td><td><span class="dot g"></span></td><td>codex</td><td><svg class="plus" width="17" height="17" viewBox="0 0 17 17"><path d="M8.5 0.5 V16.5 M0.5 8.5 H16.5" stroke="#2271b1" stroke-width="4" fill="none"/></svg></td><td><svg class="plus" width="17" height="17" viewBox="0 0 17 17"><path d="M8.5 0.5 V16.5 M0.5 8.5 H16.5" stroke="#2271b1" stroke-width="4" fill="none"/></svg></td><td><span class="cnt">0</span></td></tr>
    <tr><td><span class="cb"></span></td><td><span class="rt">Columns</span></td><td>—</td><td><span class="dot r"></span></td><td><span class="dot g"></span></td><td>columns</td><td><svg class="plus" width="17" height="17" viewBox="0 0 17 17"><path d="M8.5 0.5 V16.5 M0.5 8.5 H16.5" stroke="#2271b1" stroke-width="4" fill="none"/></svg></td><td><svg class="plus" width="17" height="17" viewBox="0 0 17 17"><path d="M8.5 0.5 V16.5 M0.5 8.5 H16.5" stroke="#2271b1" stroke-width="4" fill="none"/></svg></td><td><span class="cnt">0</span></td></tr>
    <tr><td><span class="cb"></span></td><td><span class="rt">comments</span></td><td>—</td><td><span class="dot r"></span></td><td><span class="dot g"></span></td><td>comments-2</td><td><svg class="plus" width="17" height="17" viewBox="0 0 17 17"><path d="M8.5 0.5 V16.5 M0.5 8.5 H16.5" stroke="#2271b1" stroke-width="4" fill="none"/></svg></td><td><svg class="plus" width="17" height="17" viewBox="0 0 17 17"><path d="M8.5 0.5 V16.5 M0.5 8.5 H16.5" stroke="#2271b1" stroke-width="4" fill="none"/></svg></td><td><span class="cnt">0</span></td></tr>
    </tbody>
    <tfoot><tr>
      <th style="width:43px"><span class="cb" style="top:13px"></span></th>
      <th style="width:265px">Name<svg class="sort" width="10" height="19" viewBox="0 0 10 19"><path d="M5 0 L10 7 H0 Z" fill="#1d2327"/><path d="M0 12 H10 L5 19 Z" fill="#a7aaad"/></svg></th>
      <th style="width:272px">Description<svg class="sort" width="10" height="19" viewBox="0 0 10 19"><path d="M5 0 L10 7 H0 Z" fill="#a7aaad"/><path d="M0 12 H10 L5 19 Z" fill="#a7aaad"/></svg></th>
      <th style="width:52px"><svg class="abs" style="left:10px;top:10px" width="17" height="25" viewBox="0 0 17 25"><rect x="1" y="1" width="15" height="23" rx="3.800" fill="none" stroke="#33383e" stroke-width="1.900"/><circle cx="8.500" cy="5.900" r="2.650" fill="#3a3f45"/><circle cx="8.500" cy="12.500" r="2.650" fill="#3a3f45"/><circle cx="8.500" cy="19.200" r="2.650" fill="#3a3f45"/></svg></th>
      <th style="width:46px"><svg class="abs" style="left:10px;top:10px" width="20" height="26" viewBox="0 0 20 26"><path d="M16.2 0.200 C17.500 1.500 19 2.500 19.100 3.600 C19.700 6 19.600 9 18 12 C16.500 15 14 17.500 11 19 C9 20 7 20.300 6 20.600 C4.500 21.500 2.500 23 0.400 25.800 L0 25.200 C1 23 2 21 2.500 19.500 C3.500 16 6 12 10 8 C13 5.500 15.500 3 16.200 0.200 Z" fill="#3a3f45"/><path d="M3.500 20.800 C7 15.500 12 10.500 17.200 6.500" stroke="#fff" stroke-width=".9" fill="none"/></svg></th>
      <th style="width:293px">Slug<svg class="sort" width="10" height="19" viewBox="0 0 10 19"><path d="M5 0 L10 7 H0 Z" fill="#a7aaad"/><path d="M0 12 H10 L5 19 Z" fill="#a7aaad"/></svg></th>
      <th style="width:51px"><svg class="flag" style="left:10px;top:16px" viewBox="0 0 20 14" preserveAspectRatio="none"><rect width="20" height="14" fill="#0f5c31"/><circle cx="10" cy="7.200" r="3.300" fill="#4f8a58" opacity=".75"/><circle cx="10" cy="7.200" r="1.600" fill="#9fc2a0"/></svg></th>
      <th style="width:49px"><svg class="flag" style="left:10px;top:16px" viewBox="0 0 20 14" preserveAspectRatio="none"><rect width="7" height="14" fill="#2358c2"/><rect x="6.500" width="7" height="14" fill="#dcdce0"/><rect x="13.500" width="6.500" height="14" fill="#e0161b"/><rect x="1" y="1" width="18" height="12" fill="#fff" opacity=".42"/><rect x="1" y="1" width="18" height="5" fill="#fff" opacity=".18"/></svg></th>
      <th style="width:92px">Count<svg class="sort" width="10" height="19" viewBox="0 0 10 19"><path d="M5 0 L10 7 H0 Z" fill="#a7aaad"/><path d="M0 12 H10 L5 19 Z" fill="#a7aaad"/></svg></th>
    </tr></tfoot>
  </table>
  <!-- TABLENAV BOTTOM -->
  <div class="sel" style="left:712px;top:775px;width:135px;height:37px">Bulk actions<svg width="16" height="10" viewBox="0 0 16 10"><path d="M2 1.5 L8 7.5 L14 1.5" fill="none" stroke="#50575e" stroke-width="2.2" stroke-linecap="round" stroke-linejoin="round"/></svg></div>
  <div class="btn" style="left:855px;top:775px;width:68px;height:37px">Apply</div>
  <div class="btn pri" style="left:938px;top:775px;width:125px;height:37px;letter-spacing:-.35px">Bulk Translate</div>
  <div class="tx" style="right:25px;top:780px;color:#50575e">5 items</div>
  <div class="tx help" style="left:711px;top:845px">Tags can be selectively converted to categories using the <a style="color:#2271b1;text-decoration:underline">tag to category converter</a>.</div>

  </div>
</div>
<div id="sb"><div class="thumb"></div><svg class="abs" style="left:3px;top:6px" width="12.500" height="9.500" viewBox="0 0 12 9"><path d="M6 1.800 L10.300 7.300 H1.700 Z" fill="#8b8b8b" stroke="#8b8b8b" stroke-width="2.200" stroke-linejoin="round"/></svg><svg class="abs" style="left:3px;top:916.5px" width="12.500" height="9.500" viewBox="0 0 12 9"><path d="M6 7.200 L10.300 1.700 H1.700 Z" fill="#8b8b8b" stroke="#8b8b8b" stroke-width="2.200" stroke-linejoin="round"/></svg></div>
</div>
</body>
</html>
